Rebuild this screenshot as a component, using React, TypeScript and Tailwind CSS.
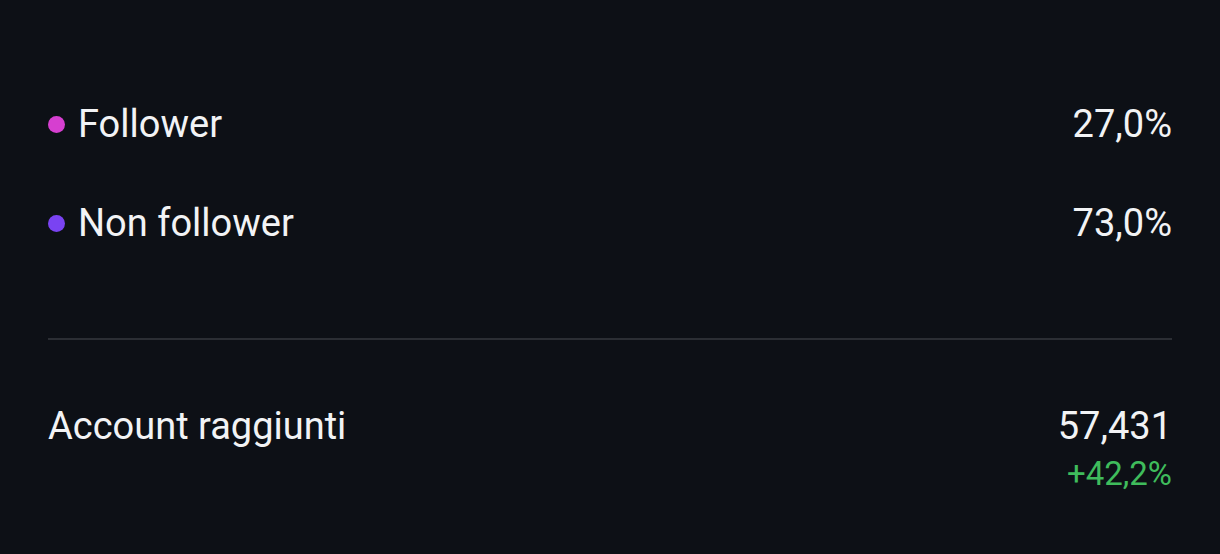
import React from "react";

export default function App() {
  return (
    <div className="w-[1220px] h-[554px] bg-[#0d1016] text-[#f2f3f5] px-[48px] overflow-hidden" style={{ fontFamily: "Roboto, 'Liberation Sans', sans-serif" }}>
      <div className="pt-[100px]">
        <div className="flex items-center justify-between h-[48px]">
          <div className="flex items-center gap-[13px]">
            <span className="w-[17px] h-[17px] rounded-full bg-[#d63fd0]" />
            <span className="text-[38px] leading-none">Follower</span>
          </div>
          <span className="text-[38px] leading-none">27,0%</span>
        </div>
        <div className="flex items-center justify-between h-[48px] mt-[51px]">
          <div className="flex items-center gap-[13px]">
            <span className="w-[17px] h-[17px] rounded-full bg-[#7a43f2]" />
            <span className="text-[38px] leading-none">Non follower</span>
          </div>
          <span className="text-[38px] leading-none">73,0%</span>
        </div>
      </div>
      <div className="mt-[91px] h-[2px] bg-[#2b2e34]" />
      <div className="flex justify-between mt-[66px]">
        <span className="text-[38px] leading-[40px]">Account raggiunti</span>
        <div className="flex flex-col items-end">
          <span className="text-[38px] leading-[40px]">57,431</span>
          <span className="text-[33px] leading-[40px] text-[#3fbc5c] mt-[8px]">+42,2%</span>
        </div>
      </div>
    </div>
  );
}
